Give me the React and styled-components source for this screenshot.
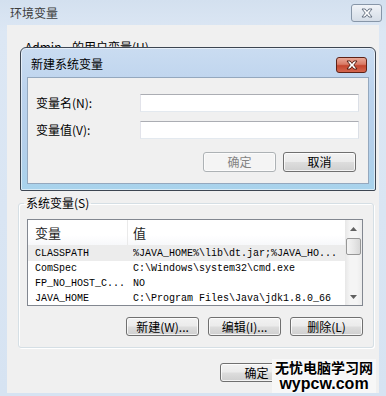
import styled, { createGlobalStyle } from "styled-components";

const GlobalStyle = createGlobalStyle`
  html, body { margin: 0; padding: 0; }
  body {
    width: 386px;
    height: 396px;
    overflow: hidden;
    background: #d8e4f2;
    font-family: "Noto Sans CJK SC", "Liberation Sans", sans-serif;
    font-size: 12px;
  }
`;

const rows = [
  { name: "CLASSPATH", value: "%JAVA_HOME%\\lib\\dt.jar;%JAVA_HO...", selected: true },
  { name: "ComSpec", value: "C:\\Windows\\system32\\cmd.exe" },
  { name: "FP_NO_HOST_C...", value: "NO" },
  { name: "JAVA_HOME", value: "C:\\Program Files\\Java\\jdk1.8.0_66" },
];

const CloseGlyph = ({ stroke }) => (
  <svg width="12" height="10" viewBox="0 0 12 10">
    <polygon
      points="1,1 4.2,1 6,3.4 7.8,1 11,1 7.8,5 11,9 7.8,9 6,6.6 4.2,9 1,9 4.2,5"
      fill="#fff"
      stroke={stroke}
      strokeWidth="0.9"
      strokeLinejoin="round"
    />
  </svg>
);

const Arrow = ({ up }) => (
  <svg width="7" height="4" viewBox="0 0 7 4">
    <polygon points={up ? "0,4 3.5,0 7,4" : "0,0 3.5,4 7,0"} fill="#606060" />
  </svg>
);

export default function App() {
  return (
    <>
      <GlobalStyle />
      <Window>
        <TitleBar>
          <Title>环境变量</Title>
          <OuterClose>
            <CloseGlyph stroke="#5b6878" />
          </OuterClose>
        </TitleBar>

        <Client>
          <UserLabel>
            <UserName>Admin</UserName>的用户变量(U)
          </UserLabel>

          <Group>
            <Legend>系统变量(S)</Legend>
            <List>
              <Table>
                <HeaderRow>
                  <HeadCell>变量</HeadCell>
                  <HeadCell $last>值</HeadCell>
                </HeaderRow>
                {rows.map((r) => (
                  <Row key={r.name} $selected={r.selected}>
                    <NameCell>{r.name}</NameCell>
                    <ValueCell>{r.value}</ValueCell>
                  </Row>
                ))}
              </Table>
              <ScrollBar>
                <ScrollArrow><Arrow up /></ScrollArrow>
                <Thumb />
                <Track />
                <ScrollArrow><Arrow /></ScrollArrow>
              </ScrollBar>
            </List>
            <ButtonRow>
              <Button>新建(W)...</Button>
              <Button>编辑(I)...</Button>
              <Button>删除(L)</Button>
            </ButtonRow>
          </Group>

          <BottomRow>
            <Button>确定</Button>
            <Button>取消</Button>
          </BottomRow>
        </Client>

        <Dialog>
          <DialogTitleBar>
            <DialogTitle>新建系统变量</DialogTitle>
            <RedClose>
              <CloseGlyph stroke="#4a1308" />
            </RedClose>
          </DialogTitleBar>
          <DialogClient>
            <Form>
              <FieldLabel>变量名(N):</FieldLabel>
              <Input />
              <FieldLabel>变量值(V):</FieldLabel>
              <Input />
            </Form>
            <DialogButtons>
              <Button disabled $h={20}>确定</Button>
              <Button $h={20}>取消</Button>
            </DialogButtons>
          </DialogClient>
        </Dialog>

        <Watermark>
          <span>无忧电脑学习网</span>
          <WatermarkUrl>wypcw.com</WatermarkUrl>
        </Watermark>
      </Window>
    </>
  );
}

const Window = styled.div`
  position: relative;
  width: 386px;
  height: 396px;
  display: flex;
  flex-direction: column;
  background: linear-gradient(180deg, #d3e0ef 0%, #dce7f4 8%, #d6e3f2 100%);
`;

const TitleBar = styled.div`
  height: 25px;
  display: flex;
  justify-content: space-between;
  align-items: flex-start;
  padding: 0 4px 0 10px;
`;

const Title = styled.div`
  line-height: 26px;
  color: #3c3c3c;
`;

const OuterClose = styled.div`
  margin-top: 4px;
  width: 29px;
  height: 16px;
  border: 1px solid #8796a8;
  border-radius: 3px;
  background: linear-gradient(180deg, #f1f4f8 0%, #e2e8ef 50%, #d5dde7 100%);
  display: flex;
  align-items: center;
  justify-content: center;
`;

const Client = styled.div`
  flex: 1;
  margin: 0 7px 3px 7px;
  padding-top: 15px;
  background: #f0f0f0;
  display: flex;
  flex-direction: column;
`;

const UserLabel = styled.div`
  margin-left: 18px;
  line-height: 14px;
  color: #000;
`;

const UserName = styled.span`
  display: inline-block;
  width: 47px;
`;

const Group = styled.fieldset`
  margin: 142px 5px 0 11px;
  padding: 0 10px 11px 8px;
  border: 1px solid #d5dfe5;
  border-radius: 3px;
  box-shadow: inset 1px 1px 0 #fff, 1px 1px 0 #fff;
  display: flex;
  flex-direction: column;
`;

const Legend = styled.legend`
  padding: 0 2px;
  margin-left: -3px;
  line-height: 14px;
  color: #000;
`;

const List = styled.div`
  margin-top: 9px;
  height: 85px;
  border: 1px solid #828790;
  background: #fff;
  display: flex;
  overflow: hidden;
`;

const Table = styled.div`
  flex: 1;
  overflow: hidden;
`;

const HeaderRow = styled.div`
  height: 25px;
  display: flex;
  border-bottom: 1px solid #ececec;
  background: linear-gradient(180deg, #ffffff 0%, #ffffff 60%, #f7f8fa 100%);
`;

const HeadCell = styled.div`
  width: ${(p) => (p.$last ? "auto" : "100px")};
  flex: ${(p) => (p.$last ? 1 : "none")};
  padding-left: ${(p) => (p.$last ? 5 : 7)}px;
  line-height: 25px;
  font-size: 13px;
  color: #1e1e1e;
  border-right: ${(p) => (p.$last ? "none" : "1px solid #eaeaea")};
  box-sizing: border-box;
`;

const Row = styled.div`
  height: 15px;
  display: flex;
  align-items: center;
  background: ${(p) => (p.$selected ? "#ececec" : "#fff")};
  font-family: "Liberation Mono", "DejaVu Sans Mono", monospace;
  font-size: 10px;
  color: #000;
  white-space: nowrap;
`;

const NameCell = styled.div`
  width: 105px;
  padding-left: 7px;
  box-sizing: border-box;
  overflow: hidden;
`;

const ValueCell = styled.div`
  flex: 1;
  overflow: hidden;
`;

const ScrollBar = styled.div`
  width: 17px;
  display: flex;
  flex-direction: column;
  align-items: center;
  background: linear-gradient(90deg, #e7e7e7 0%, #f5f5f5 30%, #f5f5f5 70%, #ececec 100%);
`;

const ScrollArrow = styled.div`
  width: 17px;
  height: 17px;
  display: flex;
  align-items: center;
  justify-content: center;
`;

const Thumb = styled.div`
  width: 13px;
  height: 15px;
  margin-top: 1px;
  border: 1px solid #979797;
  border-radius: 2px;
  background: linear-gradient(90deg, #f4f4f4 0%, #e8e8e8 50%, #d8d8d8 100%);
`;

const Track = styled.div`
  flex: 1;
`;

const ButtonRow = styled.div`
  margin-top: 11px;
  display: flex;
  justify-content: flex-end;
  gap: 9px;
`;

const Button = styled.button`
  width: 73px;
  height: ${(p) => p.$h || 19}px;
  padding: 0;
  border: 1px solid ${(p) => (p.disabled ? "#adb2b5" : "#707070")};
  border-radius: 3px;
  background: ${(p) =>
    p.disabled
      ? "#f4f4f4"
      : "linear-gradient(180deg, #f2f2f2 0%, #ebebeb 48%, #dddddd 52%, #cfcfcf 100%)"};
  box-shadow: inset 0 0 0 1px ${(p) => (p.disabled ? "#fbfbfb" : "rgba(255,255,255,0.75)")};
  color: ${(p) => (p.disabled ? "#838383" : "#000")};
  font-family: "Noto Sans CJK SC", "Liberation Sans", sans-serif;
  font-size: 12px;
  line-height: 16px;
`;

const BottomRow = styled.div`
  margin-top: 15px;
  padding-right: 5px;
  display: flex;
  justify-content: flex-end;
  gap: 8px;
`;

const Dialog = styled.div`
  position: absolute;
  left: 20px;
  top: 47px;
  width: 356px;
  height: 144px;
  box-sizing: border-box;
  border: 1px solid #3d4652;
  border-radius: 6px 6px 2px 2px;
  background: linear-gradient(180deg, #cadcf1 0%, #bcd3ed 30%, #b4cfea 70%, #a8d3ec 100%);
  box-shadow: inset 0 0 0 1px rgba(255, 255, 255, 0.55);
  display: flex;
  flex-direction: column;
`;

const DialogTitleBar = styled.div`
  height: 29px;
  display: flex;
  justify-content: space-between;
  align-items: flex-start;
  padding: 0 8px 0 10px;
`;

const DialogTitle = styled.div`
  line-height: 32px;
  color: #000;
`;

const RedClose = styled.div`
  margin-top: 9px;
  width: 29px;
  height: 14px;
  border: 1px solid #5e2217;
  border-radius: 3px;
  background: linear-gradient(180deg, #e9a897 0%, #d97a66 45%, #c4452e 55%, #d4674f 100%);
  display: flex;
  align-items: center;
  justify-content: center;
`;

const DialogClient = styled.div`
  flex: 1;
  margin: 0 6px 6px 6px;
  border: 1px solid #94a8be;
  background: #f0f0f0;
  padding: 16px 9px 0 8px;
  display: flex;
  flex-direction: column;
`;

const Form = styled.div`
  display: grid;
  grid-template-columns: 104px 1fr;
  row-gap: 9px;
  align-items: center;
`;

const FieldLabel = styled.div`
  line-height: 18px;
  color: #000;
`;

const Input = styled.div`
  height: 16px;
  border: 1px solid;
  border-color: #abadb3 #dbdfe6 #e3e9ef #e2e3ea;
  background: #fff;
`;

const DialogButtons = styled.div`
  margin-top: 13px;
  padding-right: 3px;
  display: flex;
  justify-content: flex-end;
  gap: 7px;
`;

const Watermark = styled.div`
  position: absolute;
  left: 272px;
  top: 359px;
  width: 104px;
  padding-bottom: 2px;
  background: #f7f7f7;
  display: flex;
  flex-direction: column;
  align-items: center;
  font-weight: 700;
  font-size: 14px;
  line-height: 17px;
  color: #000;
  text-shadow: 0 0 2px #fff, 0 0 2px #fff, 0 0 3px #fff;
`;

const WatermarkUrl = styled.span`
  font-family: "Liberation Sans", sans-serif;
  font-size: 16px;
  line-height: 15px;
`;
